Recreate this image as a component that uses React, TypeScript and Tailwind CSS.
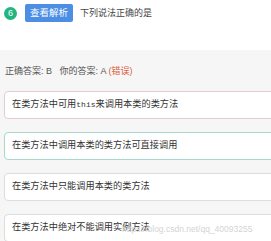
import React from 'react';

const options = [
  { key: 'A', text: <>在类方法中可用<span className="font-['Liberation_Mono',monospace] text-[8px]">this</span>来调用本类的类方法</>, border: 'border-[#e6cccc]' },
  { key: 'B', text: '在类方法中调用本类的类方法可直接调用', border: 'border-[#a9d9cd]' },
  { key: 'C', text: '在类方法中只能调用本类的类方法', border: 'border-[#dddddd]' },
  { key: 'D', text: '在类方法中绝对不能调用实例方法', border: 'border-[#dddddd]' },
];

const App = () => {
  return (
    <div className="relative w-[271px] h-[241px] overflow-hidden bg-white font-['Liberation_Sans','Noto_Sans_CJK_SC',sans-serif] text-[#333]">
      <div className="h-[50px] flex items-start pl-1 pt-1">
        <div className="mt-[3px] w-[13px] h-[13px] rounded-full bg-[#22b67f] text-white text-[9px] leading-[13px] text-center">6</div>
        <div className="ml-[8px] w-[48px] h-[18px] rounded-[2px] bg-[#4b8ee4] text-white text-[9.5px] leading-[18px] text-center">查看解析</div>
        <div className="ml-[7px] mt-[3px] text-[9px] leading-[12px] text-[#444]">下列说法正确的是</div>
      </div>
      <div className="h-[191px] bg-[#f6f6f6] pl-1 pt-[15px]">
        <p className="text-[9px] leading-[12px] text-[#555] pl-px">
          正确答案: B &nbsp;&nbsp;你的答案: A <span className="text-[#e0603e]">(错误)</span>
        </p>
        <div className="mt-[14px] flex flex-col gap-[13px]">
          {options.map((o) => (
            <div key={o.key} className={`w-[300px] h-[28px] shrink-0 bg-white border rounded-[4px] ${o.border} flex items-center pl-[7px] text-[9.2px] text-[#333]`}>
              {o.text}
            </div>
          ))}
        </div>
      </div>
      <div className="absolute left-[122px] top-[223px] text-[8.5px] text-[#d4d4d4] whitespace-nowrap">https://blog.csdn.net/qq_40093255</div>
    </div>
  );
};

export default App;
